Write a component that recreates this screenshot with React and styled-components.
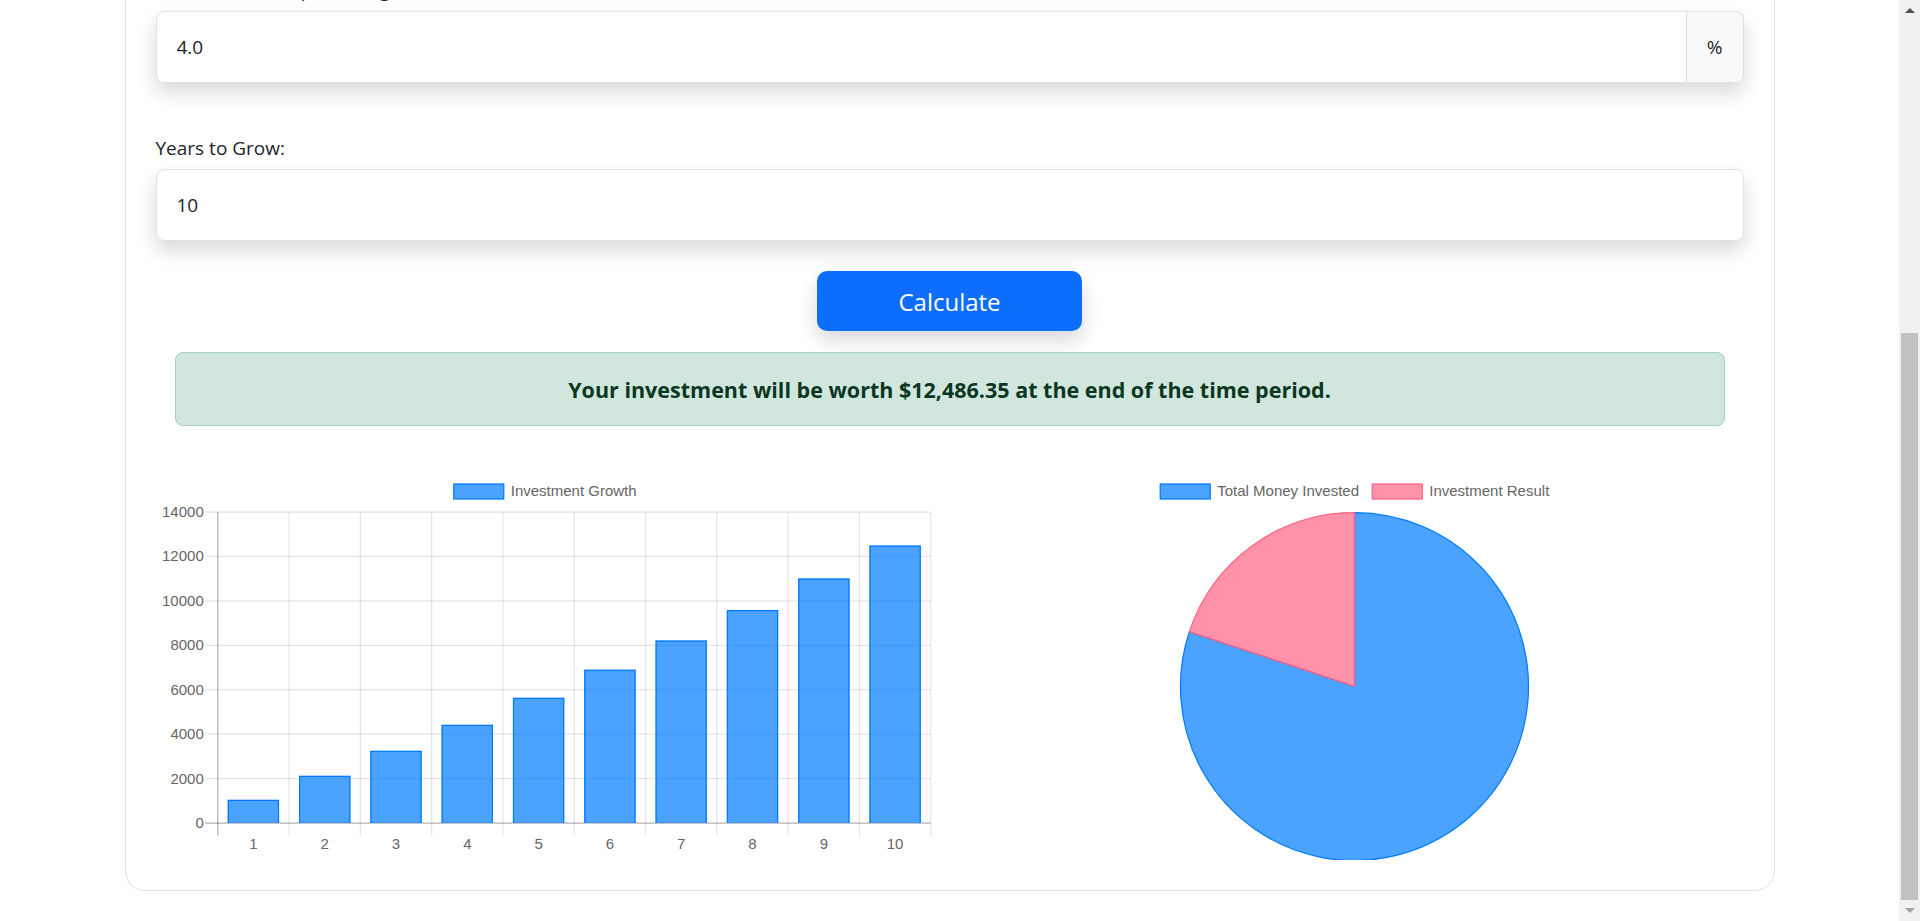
import React, { useLayoutEffect, useRef } from 'react'
import styled, { createGlobalStyle } from 'styled-components'

const contribution = 1000
const rate = 0.04
const years = 10

const growth = Array.from({ length: years }, (_, i) =>
  contribution * ((Math.pow(1 + rate, i + 1) - 1) / rate) * (1 + rate)
)
const result = growth[years - 1]
const invested = contribution * years

const money = v =>
  '$' + v.toLocaleString('en-US', { minimumFractionDigits: 2, maximumFractionDigits: 2 })

const BLUE_FILL = 'rgba(0, 123, 255, 0.7)'
const BLUE_LINE = 'rgba(0, 123, 255, 1)'
const PINK_FILL = 'rgba(255, 99, 132, 0.7)'
const PINK_LINE = 'rgba(255, 99, 132, 1)'
const CHART_FONT = '"Liberation Sans", Arial, sans-serif'

const GlobalStyle = createGlobalStyle`
  html, body {
    height: 100%;
    overflow: hidden;
  }
  body {
    margin: 0;
    background: #fff;
    color: #212529;
    font-family: "Open Sans", "Noto Sans", sans-serif;
  }
`

const Screen = styled.div`
  display: flex;
  height: 100vh;
`

const Viewport = styled.div`
  flex: 1;
  min-width: 0;
  overflow-y: auto;
  scrollbar-width: none;
  &::-webkit-scrollbar {
    display: none;
  }
`

const Scrollbar = styled.div`
  display: flex;
  flex-direction: column;
  width: 21px;
  background: #f1f1f1;
`

const ScrollButton = styled.div`
  display: flex;
  align-items: center;
  justify-content: center;
  height: 21px;
  flex-shrink: 0;
  &::before {
    content: '';
    border-left: 5px solid transparent;
    border-right: 5px solid transparent;
    border-top: ${p => (p.$down ? '5px solid #a3a3a3' : 'none')};
    border-bottom: ${p => (p.$down ? 'none' : '5px solid #505050')};
  }
`

const Thumb = styled.div`
  height: 567px;
  margin: auto 2px 0;
  background: #c1c1c1;
`

const Page = styled.div`
  padding: 30px 0;
`

const Card = styled.main`
  box-sizing: border-box;
  width: 1650px;
  margin: 0 auto;
  padding: 30px;
  border: 1px solid #dee2e6;
  border-radius: 20px;
  background: #fff;
`

const Title = styled.h1`
  margin: 0 0 40px;
  text-align: center;
  font-size: 40px;
  font-weight: 500;
  line-height: 1.2;
`

const Field = styled.div`
  margin-bottom: ${p => (p.$last ? '30px' : '50px')};
`

const Label = styled.label`
  display: block;
  margin-bottom: 6px;
  font-size: 19px;
  line-height: 30px;
`

const InputGroup = styled.div`
  display: flex;
  border-radius: 8px;
  box-shadow: 0 10px 20px rgba(0, 0, 0, 0.15);
`

const Input = styled.input`
  flex: 1;
  min-width: 0;
  box-sizing: border-box;
  height: 72px;
  padding: 0 20px;
  border: 1px solid #dee2e6;
  border-radius: ${p => (p.$addon === 'right' ? '8px 0 0 8px' : p.$addon === 'left' ? '0 8px 8px 0' : '8px')};
  background: #fff;
  color: #212529;
  font-family: inherit;
  font-size: 19px;
  outline: none;
`

const Addon = styled.span`
  display: flex;
  align-items: center;
  justify-content: center;
  width: 56px;
  border: 1px solid #dee2e6;
  border-left: ${p => (p.$side === 'right' ? 'none' : '1px solid #dee2e6')};
  border-right: ${p => (p.$side === 'left' ? 'none' : '1px solid #dee2e6')};
  border-radius: ${p => (p.$side === 'right' ? '0 8px 8px 0' : '8px 0 0 8px')};
  background: #f8f9fa;
  font-size: 19px;
`

const Button = styled.button`
  display: block;
  width: 265px;
  height: 60px;
  margin: 0 auto;
  border: none;
  border-radius: 10px;
  background: #0d6efd;
  color: #fff;
  font-family: inherit;
  font-size: 24px;
  box-shadow: 0 10px 20px rgba(0, 0, 0, 0.15);
  cursor: pointer;
`

const Alert = styled.div`
  display: flex;
  align-items: center;
  justify-content: center;
  height: 74px;
  margin: 21px 19px 45px;
  box-sizing: border-box;
  border: 1px solid #a3cfbb;
  border-radius: 8px;
  background: #d1e7dd;
  color: #0a3622;
  font-size: 21.5px;
  font-weight: 700;
`

const ChartRow = styled.div`
  display: flex;
  margin: 0 -15px;
`

const ChartCol = styled.div`
  flex: 1;
  padding: 0 15px;
  svg {
    display: block;
    width: 100%;
    height: 389px;
  }
`

const W = 777.5
const H = 389

const LegendItem = ({ x, label, fill, stroke }) => (
  <g>
    <rect x={x} y={13} width={50} height={15} fill={fill} stroke={stroke} strokeWidth={1.25} />
    <text x={x + 57} y={21} fontSize={15} fill="#666" fontFamily={CHART_FONT} dominantBaseline="middle">
      {label}
    </text>
  </g>
)

const BarChart = () => {
  const left = 61
  const right = 774
  const top = 41
  const bottom = 352
  const max = 14000
  const cw = (right - left) / years
  const bw = cw * 0.8 * 0.9
  const yOf = v => bottom - (v / max) * (bottom - top)
  const ticks = [0, 2000, 4000, 6000, 8000, 10000, 12000, 14000]

  return (
    <svg viewBox={`0 0 ${W} ${H}`}>
      <LegendItem x={297} label="Investment Growth" fill={BLUE_FILL} stroke={BLUE_LINE} />
      {ticks.map(t => (
        <g key={t}>
          <line
            x1={left - 12.5}
            x2={right}
            y1={yOf(t)}
            y2={yOf(t)}
            stroke={t === 0 ? 'rgba(0,0,0,0.3)' : 'rgba(0,0,0,0.1)'}
            strokeWidth={1.25}
          />
          <text x={left - 14} y={yOf(t) + 1} fontSize={15} fill="#666" fontFamily={CHART_FONT} textAnchor="end" dominantBaseline="middle">
            {t}
          </text>
        </g>
      ))}
      {Array.from({ length: years + 1 }, (_, i) => (
        <line
          key={i}
          x1={left + i * cw}
          x2={left + i * cw}
          y1={top}
          y2={bottom + 12.5}
          stroke={i === 0 ? 'rgba(0,0,0,0.3)' : 'rgba(0,0,0,0.1)'}
          strokeWidth={1.25}
        />
      ))}
      {growth.map((v, i) => {
        const x = left + i * cw + (cw - bw) / 2
        const y = yOf(v)
        return (
          <g key={i}>
            <rect x={x} y={y} width={bw} height={bottom - y} fill={BLUE_FILL} />
            <path
              d={`M${x + 0.6} ${bottom} V${y + 0.6} H${x + bw - 0.6} V${bottom}`}
              fill="none"
              stroke={BLUE_LINE}
              strokeWidth={1.25}
            />
            <text x={left + (i + 0.5) * cw} y={374} fontSize={15} fill="#666" fontFamily={CHART_FONT} textAnchor="middle" dominantBaseline="middle">
              {i + 1}
            </text>
          </g>
        )
      })}
    </svg>
  )
}

const PieChart = () => {
  const cx = W / 2
  const cy = 215.5
  const r = 174
  const share = invested / result
  const a = share * Math.PI * 2
  const px = cx + r * Math.sin(a)
  const py = cy - r * Math.cos(a)

  return (
    <svg viewBox={`0 0 ${W} ${H}`}>
      <LegendItem x={194.5} label="Total Money Invested" fill={BLUE_FILL} stroke={BLUE_LINE} />
      <LegendItem x={406.5} label="Investment Result" fill={PINK_FILL} stroke={PINK_LINE} />
      <path
        d={`M${cx} ${cy} L${cx} ${cy - r} A${r} ${r} 0 1 1 ${px} ${py} Z`}
        fill={BLUE_FILL}
        stroke={BLUE_LINE}
        strokeWidth={1.25}
        strokeLinejoin="round"
      />
      <path
        d={`M${cx} ${cy} L${px} ${py} A${r} ${r} 0 0 1 ${cx} ${cy - r} Z`}
        fill={PINK_FILL}
        stroke={PINK_LINE}
        strokeWidth={1.25}
        strokeLinejoin="round"
      />
    </svg>
  )
}

const App = () => {
  const viewRef = useRef(null)

  useLayoutEffect(() => {
    const el = viewRef.current
    if (el) el.scrollTop = el.scrollHeight
  }, [])

  return (
    <Screen>
      <GlobalStyle />
      <Viewport ref={viewRef}>
        <Page>
          <Card>
            <Title>Investment Calculator</Title>
            <Field>
              <Label htmlFor="initial">Initial Investment:</Label>
              <InputGroup>
                <Addon $side="left">$</Addon>
                <Input id="initial" $addon="left" defaultValue="0" />
              </InputGroup>
            </Field>
            <Field>
              <Label htmlFor="contribution">Annual Contribution:</Label>
              <InputGroup>
                <Addon $side="left">$</Addon>
                <Input id="contribution" $addon="left" defaultValue="1000" />
              </InputGroup>
            </Field>
            <Field>
              <Label htmlFor="rate">Interest Rate (in percentage):</Label>
              <InputGroup>
                <Input id="rate" $addon="right" defaultValue="4.0" />
                <Addon $side="right">%</Addon>
              </InputGroup>
            </Field>
            <Field $last>
              <Label htmlFor="years">Years to Grow:</Label>
              <InputGroup>
                <Input id="years" defaultValue="10" />
              </InputGroup>
            </Field>
            <Button type="button">Calculate</Button>
            <Alert>Your investment will be worth {money(result)} at the end of the time period.</Alert>
            <ChartRow>
              <ChartCol>
                <BarChart />
              </ChartCol>
              <ChartCol>
                <PieChart />
              </ChartCol>
            </ChartRow>
          </Card>
        </Page>
      </Viewport>
      <Scrollbar>
        <ScrollButton />
        <Thumb />
        <ScrollButton $down />
      </Scrollbar>
    </Screen>
  )
}

export default App
